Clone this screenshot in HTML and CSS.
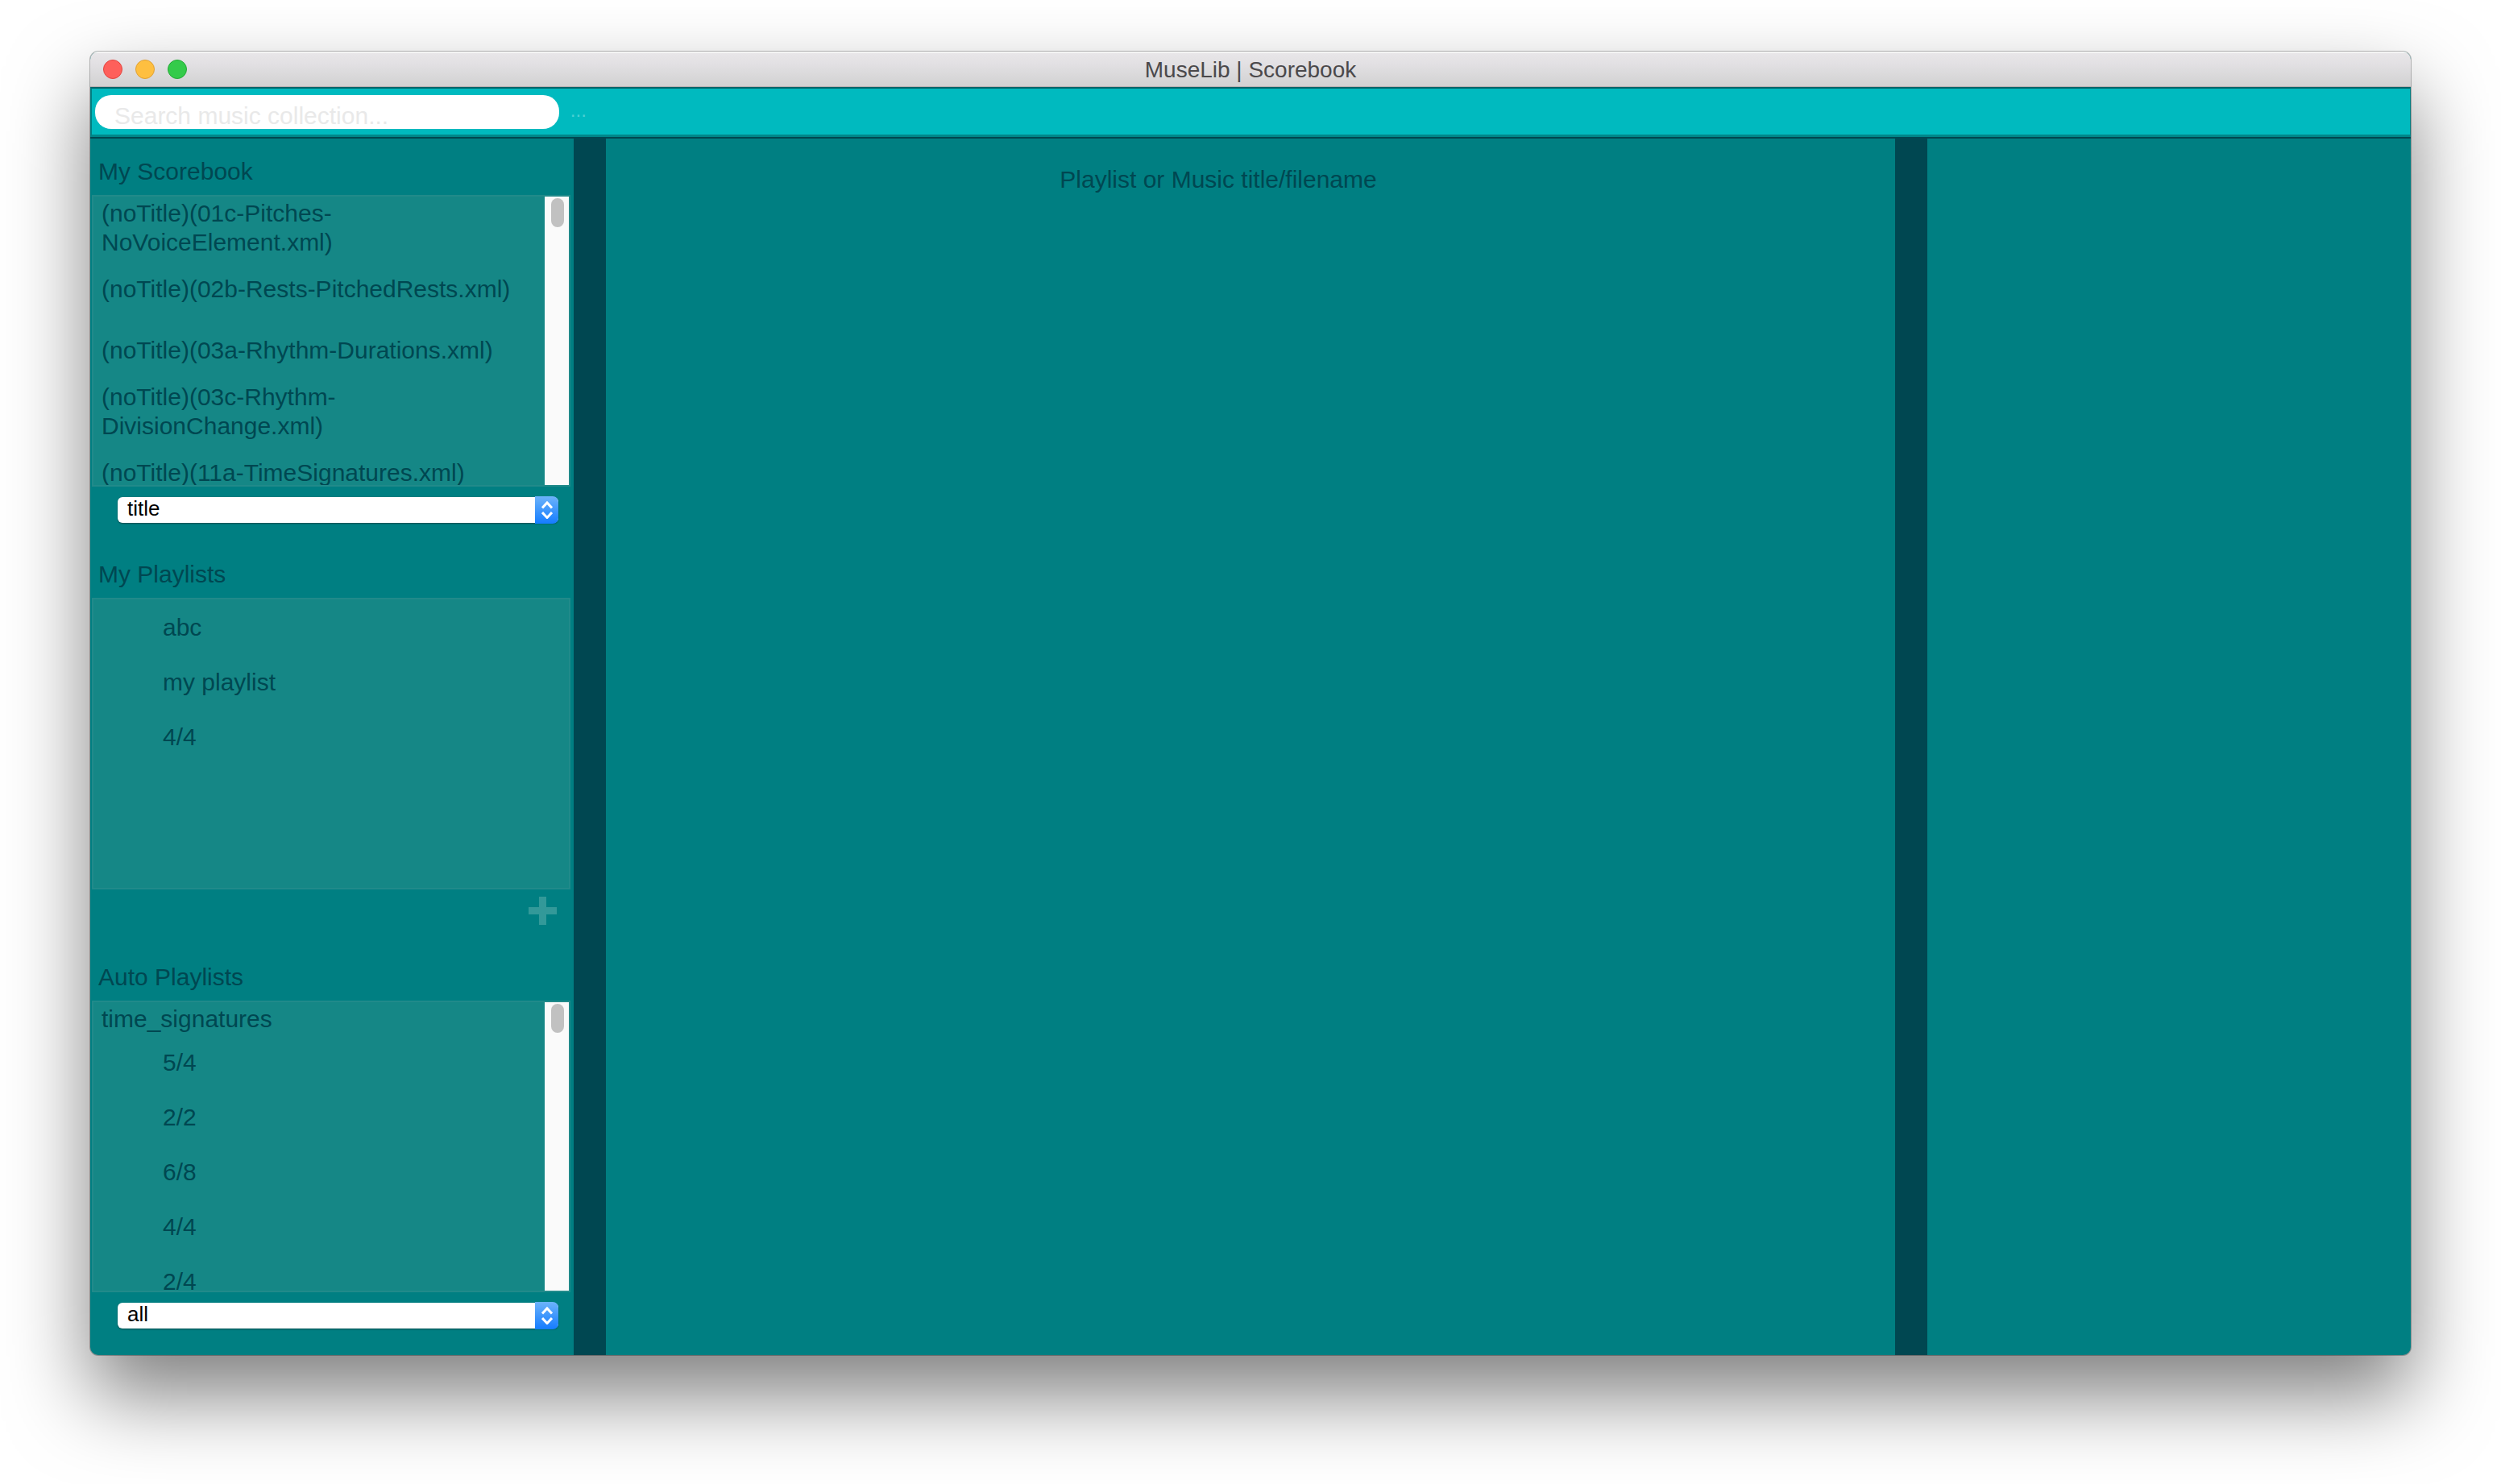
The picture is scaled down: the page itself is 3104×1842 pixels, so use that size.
FILE: index.html
```html
<!DOCTYPE html>
<html lang="en">
<head>
<meta charset="utf-8">
<title>MuseLib | Scorebook</title>
<link rel="stylesheet" href="styles.css">
</head>
<body>
<div class="window">
  <header class="titlebar">
    <div class="lights">
      <button class="light light-close" type="button" aria-label="Close"></button>
      <button class="light light-minimize" type="button" aria-label="Minimize"></button>
      <button class="light light-zoom" type="button" aria-label="Zoom"></button>
    </div>
    <h1 class="window-title">MuseLib | Scorebook</h1>
  </header>

  <form class="toolbar">
    <input class="search" type="text" aria-label="Search music collection" placeholder="Search music collection...">
    <span class="status">...</span>
  </form>

  <div class="panes">
    <aside class="sidebar">
      <section class="section">
        <h2 class="section-title">My Scorebook</h2>
        <div class="listbox">
          <ul class="list">
            <li class="score">(noTitle)(01c-Pitches-NoVoiceElement.xml)</li>
            <li class="score">(noTitle)(02b-Rests-PitchedRests.xml)</li>
            <li class="score">(noTitle)(03a-Rhythm-Durations.xml)</li>
            <li class="score">(noTitle)(03c-Rhythm-DivisionChange.xml)</li>
            <li class="score">(noTitle)(11a-TimeSignatures.xml)</li>
          </ul>
          <div class="track"><div class="thumb"></div></div>
        </div>
        <div class="section-footer">
          <div class="picker">
            <select class="select" aria-label="Sort scorebook by">
              <option>title</option>
            </select>
            <span class="picker-cap">
              <svg width="14" height="22" viewBox="0 0 14 22" fill="none" stroke="#fff" stroke-width="3"><path d="M1 8.500 7 2l6 6.500M1 14l6 6.500L13 14"/></svg>
            </span>
          </div>
        </div>
      </section>

      <section class="section">
        <h2 class="section-title">My Playlists</h2>
        <div class="listbox">
          <ul class="list">
            <li class="playlist">abc</li>
            <li class="playlist">my playlist</li>
            <li class="playlist">4/4</li>
          </ul>
        </div>
        <div class="section-footer">
          <button class="add" type="button" aria-label="Add playlist">
            <svg width="35" height="35" viewBox="0 0 35 35" fill="#339999"><path d="M13 0h9v13h13v9H22v13h-9V22H0v-9h13z"/></svg>
          </button>
        </div>
      </section>

      <section class="section">
        <h2 class="section-title">Auto Playlists</h2>
        <div class="listbox">
          <ul class="list">
            <li class="group">time_signatures</li>
            <li class="playlist">5/4</li>
            <li class="playlist">2/2</li>
            <li class="playlist">6/8</li>
            <li class="playlist">4/4</li>
            <li class="playlist">2/4</li>
          </ul>
          <div class="track"><div class="thumb"></div></div>
        </div>
        <div class="section-footer">
          <div class="picker">
            <select class="select" aria-label="Filter auto playlists">
              <option>all</option>
            </select>
            <span class="picker-cap">
              <svg width="14" height="22" viewBox="0 0 14 22" fill="none" stroke="#fff" stroke-width="3"><path d="M1 8.500 7 2l6 6.500M1 14l6 6.500L13 14"/></svg>
            </span>
          </div>
        </div>
      </section>
    </aside>
    <div class="divider"></div>
    <main class="score-view">
      <h2 class="score-title">Playlist or Music title/filename</h2>
    </main>
    <div class="divider"></div>
    <aside class="details"></aside>
  </div>
</div>
</body>
</html>
```
FILE: styles.css
```css
* {
  box-sizing: border-box;
}

body {
  display: flex;
  min-height: 100vh;
  margin: 0;
  padding: 64px 112px 160px;
  background: #fff;
  color: #004751;
  font: 30px/36px "Liberation Sans", Arial, sans-serif;
}

h1,
h2,
ul {
  margin: 0;
  padding: 0;
  font-size: inherit;
  font-weight: normal;
  list-style: none;
}

.window {
  display: flex;
  flex: 1;
  flex-direction: column;
  min-width: 0;
  overflow: hidden;
  border-radius: 10px;
  background: #007f82;
  box-shadow: 0 0 0 1px rgba(0, 0, 0, 0.26), 0 50px 100px rgba(0, 0, 0, 0.5);
}

/* Title bar */
.titlebar {
  display: grid;
  grid-template-columns: 1fr auto 1fr;
  align-items: center;
  height: 44px;
  padding: 0 16px;
  background: linear-gradient(#e9e7e9, #e2e0e3 35%, #d1d1d1);
  box-shadow: inset 0 2px #f4f4f4, inset 0 -1px #b8b0b2;
}

.lights {
  display: flex;
  gap: 16px;
}

.light {
  width: 24px;
  height: 24px;
  padding: 0;
  border: 1px solid;
  border-radius: 50%;
}

.light-close {
  border-color: #e2453f;
  background: #fe605b;
}

.light-minimize {
  border-color: #dfa034;
  background: #febf40;
}

.light-zoom {
  border-color: #24a936;
  background: #34cb4a;
}

.window-title {
  padding-top: 2px;
  color: #4b494b;
  font-size: 28px;
}

/* Toolbar */
.toolbar {
  display: flex;
  align-items: flex-start;
  gap: 14px;
  height: 64px;
  padding: 8px 4px;
  border: solid #007f82;
  border-width: 2px 1px 5px 2px;
  border-top-color: #00656a;
  border-bottom-color: #00878a;
  background: #00babf;
}

.search {
  width: calc(20% + 2px);
  height: 42px;
  padding: 10px 24px 0;
  border: 0;
  border-radius: 20px;
  background: #fff;
  color: #004751;
  font: inherit;
  outline: 0;
}

.search::placeholder {
  color: #e9e9e9;
  opacity: 1;
}

.status {
  color: #4dd0d4;
  font-size: 24px;
  line-height: 38px;
}

/* Panes */
.panes {
  display: grid;
  flex: 1;
  grid-template-columns: 15fr 1fr 40fr 1fr 15fr;
  margin-top: -2px;
  border-top: 2px solid #004751;
}

.divider {
  background: #004751;
}

.sidebar {
  min-width: 0;
}

.section-title {
  padding: 23px 10px 11px;
}

.listbox {
  display: flex;
  height: 362px;
  margin: 0 4px 0 2px;
  overflow: hidden;
  border: 2px solid #218a8a;
  background: #158786;
}

.list {
  flex: 1;
  min-width: 0;
  padding-top: 1px;
  overflow: hidden;
}

.score {
  display: flex;
  align-items: center;
  height: 76px;
  padding: 0 10px;
}

.group {
  padding: 2px 10px;
}

.playlist {
  padding: 16px 10px 16px 86px;
}

.track {
  width: 30px;
  padding: 2px 6px 0 8px;
  background: #fafafa;
}

.thumb {
  height: 36px;
  border-radius: 8px;
  background: #c1c1c1;
}

.section-footer {
  display: flex;
  justify-content: flex-end;
  height: 68px;
  padding: 9px 19px 0 34px;
}

/* Drop-down */
.picker {
  position: relative;
  flex: 1;
  height: 34px;
  margin-top: 3px;
}

.select {
  width: 100%;
  height: 32px;
  margin: 1px 0;
  padding: 0 36px 4px 12px;
  border: 0;
  border-radius: 6px;
  appearance: none;
  background: #fff;
  box-shadow: 0 1px 2px rgba(0, 0, 0, 0.4);
  color: #000;
  font: 26px/28px "Liberation Sans", Arial, sans-serif;
  vertical-align: top;
}

.picker-cap {
  position: absolute;
  top: 0;
  right: 0;
  display: flex;
  align-items: center;
  justify-content: center;
  width: 29px;
  height: 34px;
  border-radius: 0 7px 7px 0;
  background: linear-gradient(#6cb3fa, #147cff);
  pointer-events: none;
}

.add {
  width: 35px;
  height: 35px;
  margin-right: 2px;
  padding: 0;
  border: 0;
  background: none;
}

.add svg {
  display: block;
}

/* Score view */
.score-view {
  padding: 33px 80px 0 0;
  text-align: center;
}
```
